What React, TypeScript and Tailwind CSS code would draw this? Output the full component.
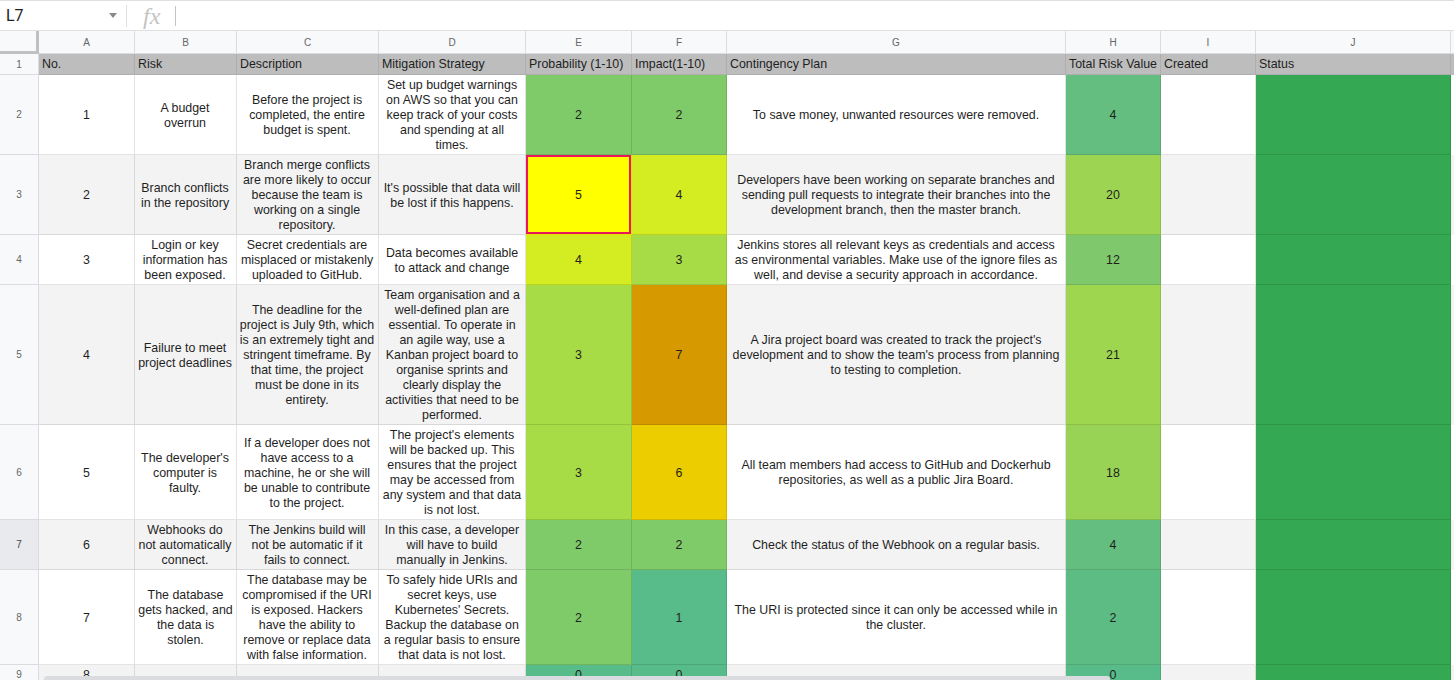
import React from 'react';

const COLS = 'grid grid-cols-[39px_96px_102px_142px_147px_106px_95px_339px_95px_95px_195px_1fr]';

type RowData = {
  num: string;
  h: string;
  band: boolean;
  active?: boolean;
  a: string;
  b: string;
  bPad?: string;
  c: string;
  d: string;
  e: string;
  eBg: string;
  f: string;
  fBg: string;
  g: string;
  t: string;
  tBg: string;
  selectE?: boolean;
};

const rows: RowData[] = [
  {
    num: '2', h: 'h-[80px]', band: false,
    a: '1', b: 'A budget overrun',
    c: 'Before the project is completed, the entire budget is spent.',
    d: 'Set up budget warnings on AWS so that you can keep track of your costs and spending at all times.',
    e: '2', eBg: 'bg-[#7fca69]', f: '2', fBg: 'bg-[#7fca69]',
    g: 'To save money, unwanted resources were removed.',
    t: '4', tBg: 'bg-[#63be7f]',
  },
  {
    num: '3', h: 'h-[80px]', band: true,
    a: '2', b: 'Branch conflicts in the repository',
    c: 'Branch merge conflicts are more likely to occur because the team is working on a single repository.',
    d: "It's possible that data will be lost if this happens.",
    e: '5', eBg: 'bg-[#ffff00]', f: '4', fBg: 'bg-[#d4ec22]', selectE: true,
    g: 'Developers have been working on separate branches and sending pull requests to integrate their branches into the development branch, then the master branch.',
    t: '20', tBg: 'bg-[#9dd552]',
  },
  {
    num: '4', h: 'h-[50px]', band: false,
    a: '3', b: 'Login or key information has been exposed.',
    c: 'Secret credentials are misplaced or mistakenly uploaded to GitHub.',
    d: 'Data becomes available to attack and change',
    e: '4', eBg: 'bg-[#d4ec22]', f: '3', fBg: 'bg-[#a8dc46]',
    g: 'Jenkins stores all relevant keys as credentials and access as environmental variables. Make use of the ignore files as well, and devise a security approach in accordance.',
    t: '12', tBg: 'bg-[#7fc86b]',
  },
  {
    num: '5', h: 'h-[140px]', band: true,
    a: '4', b: 'Failure to meet project deadlines',
    c: 'The deadline for the project is July 9th, which is an extremely tight and stringent timeframe. By that time, the project must be done in its entirety.',
    d: 'Team organisation and a well-defined plan are essential. To operate in an agile way, use a Kanban project board to organise sprints and clearly display the activities that need to be performed.',
    e: '3', eBg: 'bg-[#a8dc46]', f: '7', fBg: 'bg-[#d69a00]',
    g: "A Jira project board was created to track the project's development and to show the team's process from planning to testing to completion.",
    t: '21', tBg: 'bg-[#9fd650]',
  },
  {
    num: '6', h: 'h-[95px]', band: false,
    a: '5', b: "The developer's computer is faulty.",
    c: 'If a developer does not have access to a machine, he or she will be unable to contribute to the project.',
    d: "The project's elements will be backed up. This ensures that the project may be accessed from any system and that data is not lost.",
    e: '3', eBg: 'bg-[#a8dc46]', f: '6', fBg: 'bg-[#ebcd00]',
    g: 'All team members had access to GitHub and Dockerhub repositories, as well as a public Jira Board.',
    t: '18', tBg: 'bg-[#98d356]',
  },
  {
    num: '7', h: 'h-[50px]', band: true, active: true,
    a: '6', b: 'Webhooks do not automatically connect.',
    c: 'The Jenkins build will not be automatic if it fails to connect.',
    d: 'In this case, a developer will have to build manually in Jenkins.',
    e: '2', eBg: 'bg-[#7fca69]', f: '2', fBg: 'bg-[#7fca69]',
    g: 'Check the status of the Webhook on a regular basis.',
    t: '4', tBg: 'bg-[#63be7f]',
  },
  {
    num: '8', h: 'h-[95px]', band: false,
    a: '7', b: 'The database gets hacked, and the data is stolen.', bPad: 'pl-[2px] pr-[2px]',
    c: 'The database may be compromised if the URI is exposed. Hackers have the ability to remove or replace data with false information.',
    d: "To safely hide URIs and secret keys, use Kubernetes' Secrets. Backup the database on a regular basis to ensure that data is not lost.",
    e: '2', eBg: 'bg-[#7fca69]', f: '1', fBg: 'bg-[#57bb8a]',
    g: 'The URI is protected since it can only be accessed while in the cluster.',
    t: '2', tBg: 'bg-[#5dbc84]',
  },
  {
    num: '9', h: 'h-[20px]', band: true,
    a: '8', b: '', c: '', d: '',
    e: '0', eBg: 'bg-[#57bb8a]', f: '0', fBg: 'bg-[#57bb8a]',
    g: '', t: '0', tBg: 'bg-[#57bb8a]',
  },
];

function Cell({ children, className = '' }: { children?: React.ReactNode; className?: string }) {
  return (
    <div className={`flex items-center justify-center text-center pt-[2px] border-r border-b border-black/[0.11] overflow-hidden ${className}`}>
      <span className="block w-full">{children}</span>
    </div>
  );
}

function HeadCell({ children }: { children?: React.ReactNode }) {
  return (
    <div className="flex items-end pb-[2px] px-[3px] bg-[#bdbdbd] border-r border-b border-black/[0.08] whitespace-nowrap overflow-hidden">
      {children}
    </div>
  );
}

export default function App() {
  const letters = ['A', 'B', 'C', 'D', 'E', 'F', 'G', 'H', 'I', 'J'];
  const heads = ['No.', 'Risk', 'Description', 'Mitigation Strategy', 'Probability (1-10)', 'Impact(1-10)', 'Contingency Plan', 'Total Risk Value', 'Created', 'Status'];

  return (
    <div className="relative h-[680px] w-[1454px] overflow-hidden bg-white font-['Liberation_Sans',Arial,sans-serif] text-[12.4px] leading-[15px] text-[#1f1f1f]">
      {/* formula bar */}
      <div className="flex h-[31px] items-center border-t border-b border-[#e0e0e0] bg-white">
        <div className="flex w-[126px] items-center justify-between pl-[6px] pr-[9px]">
          <span className="text-[16px] text-[#222] font-['Roboto',Arial,sans-serif]">L7</span>
          <svg width="8" height="5" viewBox="0 0 8 5">
            <polygon points="0,0 8,0 4,5" fill="#8a8a8a" />
          </svg>
        </div>
        <div className="h-[22px] w-px bg-[#e0e0e0]" />
        <span className="ml-[16px] font-['Liberation_Serif',serif] text-[24px] italic leading-none text-[#c4c4c4]">fx</span>
        <div className="ml-[15px] h-[20px] w-px bg-[#c4c4c4]" />
      </div>

      {/* column letters */}
      <div className={`${COLS} h-[23px] bg-[#f8f9fa] text-[10px] text-[#666]`}>
        <div className="border-r-[3px] border-b-[3px] border-[#c0c0c0] bg-[#f8f9fa]" />
        {letters.map((l) => (
          <div key={l} className="flex items-center justify-center pt-[1px] border-r border-b border-[#dadce0]">{l}</div>
        ))}
        <div className="border-b border-[#dadce0]" />
      </div>

      {/* header row 1 */}
      <div className={`${COLS} h-[21px]`}>
        <div className="flex items-center justify-center border-r border-b border-[#dadce0] bg-[#f8f9fa] text-[10px] text-[#666]">1</div>
        {heads.map((h) => (
          <HeadCell key={h}>{h}</HeadCell>
        ))}
        <div className="bg-[#bdbdbd]" />
      </div>

      {rows.map((r) => {
        const base = r.band ? 'bg-[#f3f3f3]' : 'bg-white';
        return (
          <div key={r.num} className={`${COLS} ${r.h}`}>
            <div className={`flex items-center justify-center border-r border-b border-[#dadce0] text-[10px] ${r.active ? 'bg-[#e8eaed] text-[#444]' : 'bg-[#f8f9fa] text-[#666]'}`}>
              {r.num}
            </div>
            <Cell className={`${base} px-[2px]`}>{r.a}</Cell>
            <Cell className={`${base} ${r.bPad ?? 'pl-[3px] pr-[4px]'}`}>{r.b}</Cell>
            <Cell className={`${base} pl-[2px] pr-[3px]`}>{r.c}</Cell>
            <Cell className={`${base} px-[3px]`}>{r.d}</Cell>
            <Cell className={`${r.eBg} px-[2px] ${r.selectE ? 'shadow-[inset_0_0_0_2px_#e8185d]' : ''}`}>{r.e}</Cell>
            <Cell className={`${r.fBg} px-[2px]`}>{r.f}</Cell>
            <Cell className={`${base} px-[2px]`}>{r.g}</Cell>
            <Cell className={`${r.tBg} px-[2px]`}>{r.t}</Cell>
            <Cell className={base}></Cell>
            <Cell className="bg-[#34a853]"></Cell>
            <div className={base} />
          </div>
        );
      })}

      {/* horizontal scrollbar */}
      <div className="absolute bottom-0 left-[44px] h-[4px] w-[1066px] rounded-t-[3px] bg-[#dadce0]" />
    </div>
  );
}
